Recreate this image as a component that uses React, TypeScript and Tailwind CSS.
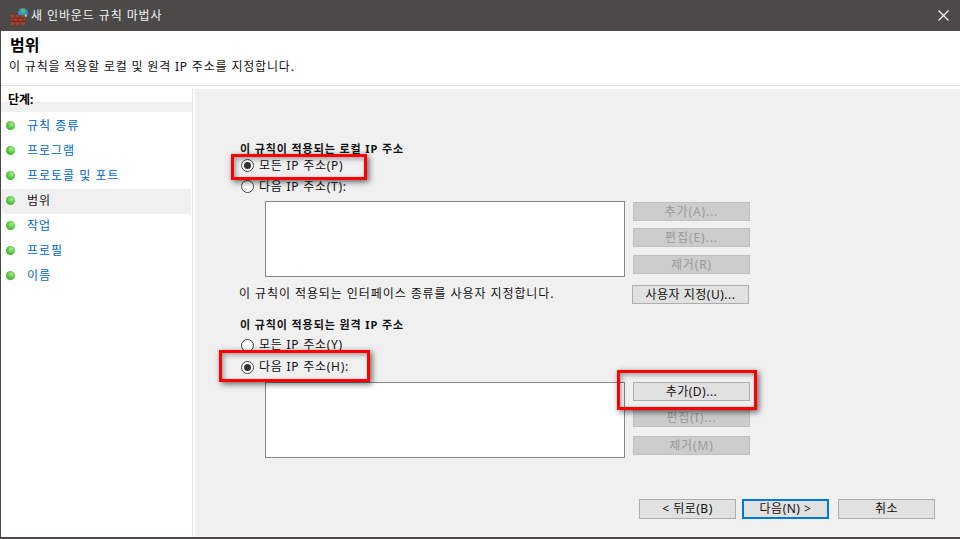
const STEPS = [
  { label: "규칙 종류" },
  { label: "프로그램" },
  { label: "프로토콜 및 포트" },
  { label: "범위", active: true },
  { label: "작업" },
  { label: "프로필" },
  { label: "이름" },
];

function WallIcon() {
  return (
    <svg width="18" height="18" viewBox="0 0 18 18" className="shrink-0">
      <circle cx="13" cy="6" r="5" fill="#2f8fe0" />
      <path d="M11 2.500c2-1.500 4-.5 4.500 1 .5 1.500-1 3-2.500 2.500S10 4 11 2.500z" fill="#57c23c" />
      <path d="M15.500 7c1 .5 1.500 1.500 1 3l-2-1z" fill="#f2d23c" />
      <rect x="1" y="8" width="14" height="10" fill="#a8402e" />
      <path d="M1 11h14M1 14.500h14M5 8v3M10 8v3M3 11v3.500M8 11v3.500M13 11v3.500M5 14.500V18M10 14.500V18" stroke="#6d2a20" strokeWidth="1" fill="none" />
    </svg>
  );
}

function Bullet() {
  return (
    <span className="h-[9px] w-[9px] shrink-0 rounded-full bg-[radial-gradient(circle_at_60%_35%,#a8ea8c,#4fc03a_55%,#3a9a35)]" />
  );
}

function Radio({ label, checked }: { label: string; checked?: boolean }) {
  return (
    <div className="flex h-full items-center gap-[5px]">
      <span className="flex h-[13px] w-[13px] shrink-0 items-center justify-center rounded-full border border-[#444444] bg-white">
        {checked && <span className="h-[7px] w-[7px] rounded-full bg-[#333333]" />}
      </span>
      <span className="text-[12px] leading-none tracking-[0.75px] text-[#111111]">{label}</span>
    </div>
  );
}

function Btn({ label, disabled, w = "w-[117px]", h = "h-[19px]", focus }: { label: string; disabled?: boolean; w?: string; h?: string; focus?: boolean }) {
  return (
    <div
      className={
        disabled
          ? `flex ${h} ${w} items-center justify-center border border-[#bfbfbf] bg-[#cccccc] text-[12px] tracking-[0.9px] text-[#9a9a9a]`
          : focus
            ? `flex ${h} ${w} items-center justify-center border-2 border-[#0078d7] bg-[#e1e1e1] text-[12px] tracking-[0.5px] text-[#111111]`
            : `flex ${h} ${w} items-center justify-center border border-[#adadad] bg-[#e1e1e1] text-[12px] tracking-[0.5px] text-[#111111]`
      }
    >
      {label}
    </div>
  );
}

function ListRow({ buttons, top, pad, lastGap }: { buttons: { label: string; disabled: boolean }[]; top: string; pad: string; lastGap: string }) {
  return (
    <div className={`${top} ml-[26px] flex gap-[8px]`}>
      <div className="h-[76px] w-[360px] border border-[#82878c] bg-white" />
      <div className={`flex flex-col ${pad}`}>
        <Btn label={buttons[0].label} disabled={buttons[0].disabled} />
        <div className="mt-[7px]">
          <Btn label={buttons[1].label} disabled={buttons[1].disabled} />
        </div>
        <div className={lastGap}>
          <Btn label={buttons[2].label} disabled={buttons[2].disabled} />
        </div>
      </div>
    </div>
  );
}

function Callout({ className }: { className: string }) {
  return (
    <div
      className={`absolute border-[3px] border-[#ff0000] shadow-[2px_2px_6px_rgba(0,0,0,0.6),inset_2px_2px_5px_rgba(0,0,0,0.35)] ${className}`}
    />
  );
}

export default function App() {
  return (
    <div className="relative flex h-[539px] w-[960px] flex-col overflow-hidden border-b-2 border-l border-[#4c4a48] bg-white font-['Noto_Sans','Noto_Sans_CJK_KR',sans-serif]">
      <div className="flex h-[31px] shrink-0 items-center bg-[#4c4a48] pl-[9px] pr-[11px]">
        <WallIcon />
        <span className="ml-[3px] text-[12px] tracking-[0.9px] text-[#f2f2f2]">새 인바운드 규칙 마법사</span>
        <svg width="11" height="11" viewBox="0 0 11 11" className="ml-auto">
          <path d="M.5.5l10 10M10.500.5l-10 10" stroke="#ffffff" strokeWidth="1.200" />
        </svg>
      </div>

      <div className="h-[55px] shrink-0 border-b border-[#e3e3e3] pl-[8px] pt-[4px]">
        <div className="pl-[1px] text-[16px] font-bold leading-[20px] text-black">범위</div>
        <div className="mt-[3px] text-[12px] leading-[18px] tracking-[0.82px] text-[#111111]">
          이 규칙을 적용할 로컬 및 원격 IP 주소를 지정합니다.
        </div>
      </div>

      <div className="flex min-h-0 flex-1 pt-[3px]">
        <aside className="w-[192px] shrink-0 border-r border-[#e8e8e8]">
          <div className="h-[13px] pl-[7px] text-[12px] font-bold leading-[22px] text-black">단계:</div>
          <div className="h-[10px] bg-[#f0f0f0]" />
          <div className="mt-[2px]">
            {STEPS.map((step) => (
              <div
                key={step.label}
                className={`mr-[1px] flex h-[25px] items-center gap-[12px] pb-[2px] pl-[5px] text-[12px] tracking-[1px] ${step.active ? "bg-[#f0f0f0] text-[#111111]" : "text-[#0066cc]"}`}
              >
                <Bullet />
                {step.label}
              </div>
            ))}
          </div>
        </aside>

        <main className="ml-[2px] flex flex-1 flex-col bg-[#f0f0f0] pl-[44px] pt-[53px]">
          <div className="h-[14px] pl-[1px] text-[11px] font-bold leading-[14px] tracking-[0.9px] text-[#111111]">
            이 규칙이 적용되는 로컬 IP 주소
          </div>
          <div className="h-[19px] pl-[2px]">
            <Radio label="모든 IP 주소(P)" checked />
          </div>
          <div className="h-[23px] pl-[2px]">
            <Radio label="다음 IP 주소(T):" />
          </div>
          <ListRow
            top="mt-[3px]"
            pad="pt-[1px]"
            lastGap="mt-[8px]"
            buttons={[
              { label: "추가(A)...", disabled: true },
              { label: "편집(E)...", disabled: true },
              { label: "제거(R)", disabled: true },
            ]}
          />
          <div className="mt-[8px] flex h-[19px] items-center">
            <span className="w-[393px] pb-[1px] text-[12px] tracking-[0.92px] text-[#111111]">
              이 규칙이 적용되는 인터페이스 종류를 사용자 지정합니다.
            </span>
            <Btn label="사용자 지정(U)..." />
          </div>
          <div className="mt-[14px] h-[14px] pl-[1px] text-[11px] font-bold leading-[14px] tracking-[0.9px] text-[#111111]">
            이 규칙이 적용되는 원격 IP 주소
          </div>
          <div className="mt-[2px] h-[22px] pl-[2px]">
            <Radio label="모든 IP 주소(Y)" />
          </div>
          <div className="h-[22px] pl-[2px]">
            <Radio label="다음 IP 주소(H):" checked />
          </div>
          <ListRow
            top="mt-[4px]"
            pad=""
            lastGap="mt-[9px]"
            buttons={[
              { label: "추가(D)...", disabled: false },
              { label: "편집(I)...", disabled: true },
              { label: "제거(M)", disabled: true },
            ]}
          />
          <div className="ml-[400px] mt-[41px] flex gap-[6px]">
            <Btn label="< 뒤로(B)" w="w-[97px]" h="h-[20px]" />
            <Btn label="다음(N) >" w="w-[87px]" h="h-[20px]" focus />
            <div className="ml-[3px]">
              <Btn label="취소" w="w-[97px]" h="h-[20px]" />
            </div>
          </div>
        </main>
      </div>

      <Callout className="left-[230px] top-[154px] h-[26px] w-[136px]" />
      <Callout className="left-[218px] top-[350px] h-[32px] w-[151px]" />
      <Callout className="left-[616px] top-[370px] h-[40px] w-[140px]" />
    </div>
  );
}
